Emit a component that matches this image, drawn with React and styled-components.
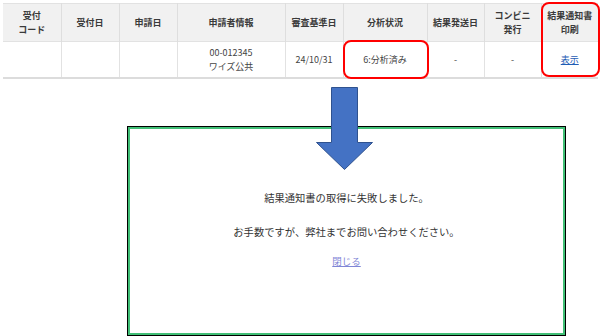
import React from "react";
import styled, { createGlobalStyle } from "styled-components";

const Global = createGlobalStyle`
  html, body { margin: 0; padding: 0; background: #fff; }
  body { font-family: "Noto Sans CJK JP", "Noto Sans", sans-serif; color: #333; }
`;

const Page = styled.div`
  position: relative;
  width: 601px;
  height: 336px;
  padding: 3px 3px 0 3px;
  box-sizing: border-box;
  display: flex;
  flex-direction: column;
`;

const TableWrap = styled.div`
  position: relative;
  width: 595px;
`;

const Table = styled.table`
  border-collapse: collapse;
  table-layout: fixed;
  width: 595px;
  border-top: 1px solid #e2e2e2;
  border-bottom: 2px solid #dcdcdc;
`;

const Th = styled.th`
  background: #f1f1f1;
  height: 37px;
  padding: 0;
  border-left: 1px solid #dedede;
  border-right: 1px solid #dedede;
  font-size: 9px;
  line-height: 14px;
  font-weight: 700;
  color: #3a3a3a;
  text-align: center;
  &:first-child { border-left: none; }
  &:last-child { border-right: none; }
`;

const Td = styled.td`
  position: relative;
  height: 35px;
  padding: 0;
  border-left: 1px solid #e2e2e2;
  border-right: 1px solid #e2e2e2;
  border-top: 1px solid #e2e2e2;
  font-size: 9px;
  line-height: 14px;
  color: #444;
  text-align: center;
  &:first-child { border-left: none; }
  &:last-child { border-right: none; }
`;

const Mark = styled.span`
  position: absolute;
  top: ${(p) => p.$top}px;
  left: ${(p) => p.$left}px;
  width: ${(p) => p.$w}px;
  height: ${(p) => p.$h}px;
  box-sizing: border-box;
  border: 2.5px solid #ff0000;
  border-radius: 8px;
  pointer-events: none;
`;

const TableLink = styled.a`
  color: #1f5db5;
  text-decoration: underline;
  font-size: 9px;
`;

const Arrow = styled.svg`
  position: absolute;
  left: 315px;
  top: 85px;
  z-index: 2;
`;

const Dialog = styled.div`
  margin: 47px 0 0 124px;
  width: 439px;
  height: 210px;
  box-sizing: border-box;
  border: 1px solid #000;
  box-shadow: inset 0 0 0 2px #41bf76;
  display: flex;
  flex-direction: column;
  align-items: center;
  padding-top: 64px;
`;

const Message = styled.p`
  margin: 0 0 ${(p) => p.$gap}px 0;
  font-size: 10.3px;
  line-height: 14px;
  color: #333;
`;

const CloseLink = styled.a`
  font-size: 9.5px;
  line-height: 14px;
  color: #7f86d6;
  text-decoration: underline;
`;

const cols = [58, 58, 58, 108, 58, 84, 57, 57, 57];

export default function App() {
  return (
    <>
      <Global />
      <Page>
        <TableWrap>
          <Table>
            <colgroup>
              {cols.map((w, i) => (
                <col key={i} style={{ width: w }} />
              ))}
            </colgroup>
            <thead>
              <tr>
                <Th>受付<br />コード</Th>
                <Th>受付日</Th>
                <Th>申請日</Th>
                <Th>申請者情報</Th>
                <Th>審査基準日</Th>
                <Th>分析状況</Th>
                <Th>結果発送日</Th>
                <Th>コンビニ<br />発行</Th>
                <Th>結果通知書<br />印刷</Th>
              </tr>
            </thead>
            <tbody>
              <tr>
                <Td></Td>
                <Td></Td>
                <Td></Td>
                <Td>00-012345<br />ワイズ公共</Td>
                <Td>24/10/31</Td>
                <Td>6:分析済み</Td>
                <Td>-</Td>
                <Td>-</Td>
                <Td><TableLink href="#">表示</TableLink></Td>
              </tr>
            </tbody>
          </Table>
          <Mark $top={37} $left={340} $w={86} $h={39} />
          <Mark $top={-1} $left={538} $w={59} $h={75} />
        </TableWrap>
        <Arrow width="60" height="88" viewBox="315 85 60 88">
          <polygon
            points="331.5,87.5 357.5,87.5 357.5,142.5 372.5,142.5 344.5,169.5 316.5,142.5 331.5,142.5"
            fill="#4472c4"
            stroke="#2f528f"
            strokeWidth="1"
          />
        </Arrow>
        <Dialog>
          <Message $gap={20}>結果通知書の取得に失敗しました。</Message>
          <Message $gap={15}>お手数ですが、弊社までお問い合わせください。</Message>
          <CloseLink href="#">閉じる</CloseLink>
        </Dialog>
      </Page>
    </>
  );
}
